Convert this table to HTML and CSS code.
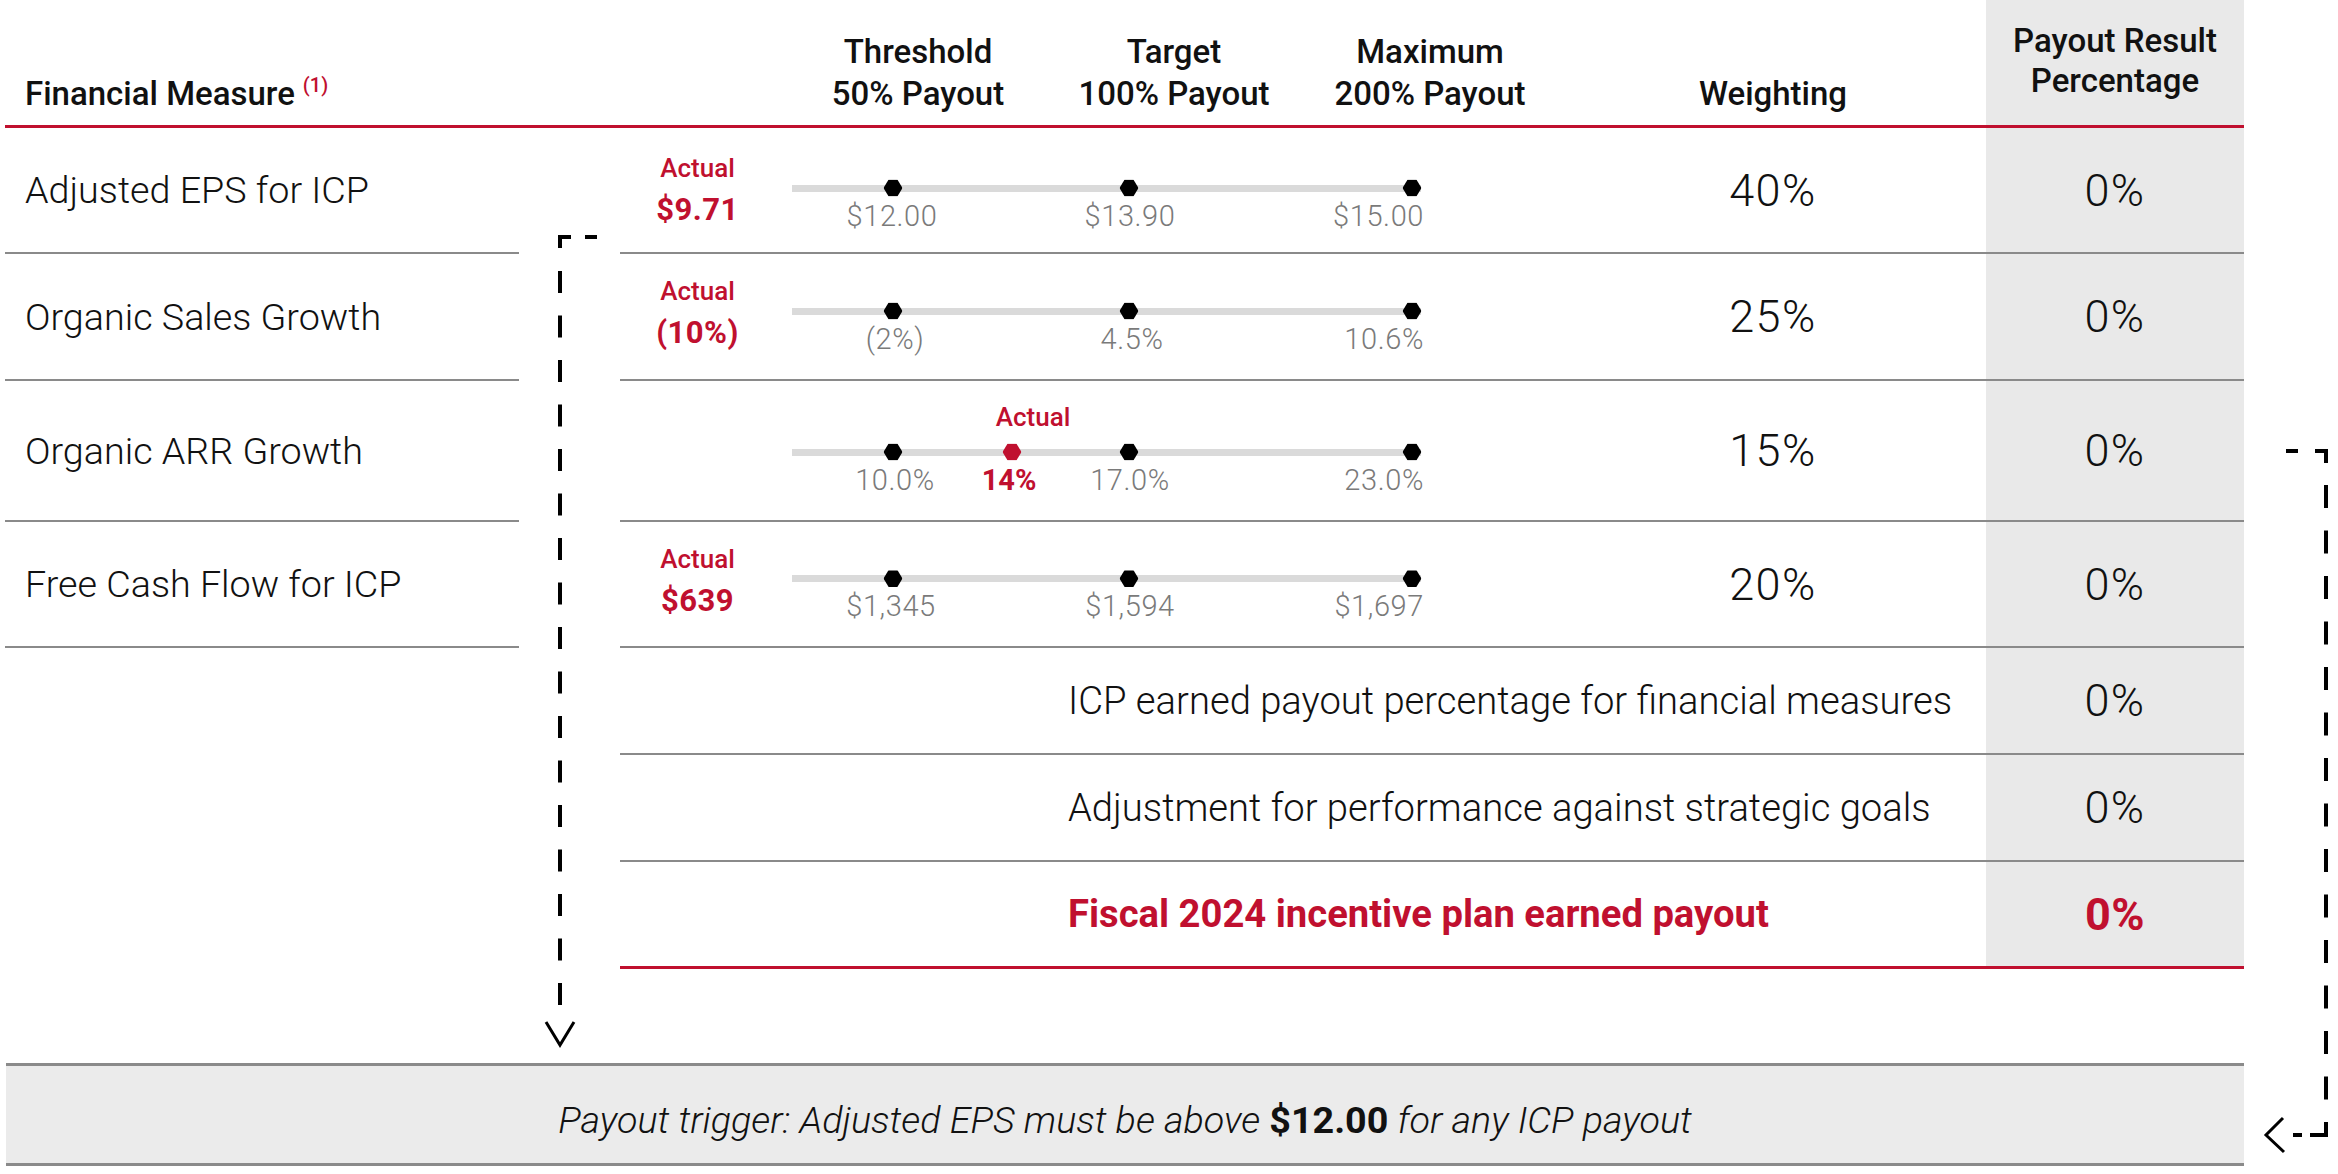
FILE: index.html
```html
<!DOCTYPE html>
<html lang="en">
<head>
<meta charset="utf-8">
<title>Fiscal 2024 ICP Payout</title>
<link rel="stylesheet" href="styles.css">
</head>
<body>
<div class="page">
  <div class="header">
    <div class="c-label h-label"><div class="h-text">Financial Measure<span class="note">(1)</span></div></div>
    <div class="c-gap"></div>
    <div class="c-actual"></div>
    <div class="c-scale h-scale">
      <div class="h-cell">Threshold<br>50% Payout</div>
      <div class="h-cell">Target<br>100% Payout</div>
      <div class="h-cell">Maximum<br>200% Payout</div>
    </div>
    <div class="c-weight h-weight">Weighting</div>
    <div class="c-result h-result">Payout Result<br>Percentage</div>
  </div>

  <div class="row">
    <div class="c-label label">Adjusted EPS for ICP</div>
    <div class="c-gap"></div>
    <div class="c-main">
      <div class="c-actual actual"><span class="a-tag">Actual</span><span class="a-val">$9.71</span></div>
      <div class="c-scale">
        <div class="track">
          <span class="mk" style="left:101px"></span>
          <span class="mk" style="left:337px"></span>
          <span class="mk" style="left:620px"></span>
          <span class="val" style="left:100px">$12.00</span>
          <span class="val" style="left:338px">$13.90</span>
          <span class="val val--end">$15.00</span>
        </div>
      </div>
      <div class="c-weight num">40%</div>
      <div class="c-result num">0%</div>
    </div>
  </div>

  <div class="row row--b">
    <div class="c-label label">Organic Sales Growth</div>
    <div class="c-gap"></div>
    <div class="c-main">
      <div class="c-actual actual up"><span class="a-tag">Actual</span><span class="a-val">(10%)</span></div>
      <div class="c-scale up">
        <div class="track">
          <span class="mk" style="left:101px"></span>
          <span class="mk" style="left:337px"></span>
          <span class="mk" style="left:620px"></span>
          <span class="val" style="left:103px">(2%)</span>
          <span class="val" style="left:340px">4.5%</span>
          <span class="val val--end">10.6%</span>
        </div>
      </div>
      <div class="c-weight num">25%</div>
      <div class="c-result num">0%</div>
    </div>
  </div>

  <div class="row row--c">
    <div class="c-label label">Organic ARR Growth</div>
    <div class="c-gap"></div>
    <div class="c-main">
      <div class="c-actual actual"></div>
      <div class="c-scale">
        <div class="track track--low">
          <span class="mk" style="left:101px"></span>
          <span class="mk mk--red" style="left:220px"></span>
          <span class="mk" style="left:337px"></span>
          <span class="mk" style="left:620px"></span>
          <span class="tag-above" style="left:241px">Actual</span>
          <span class="val" style="left:103px">10.0%</span>
          <span class="val val--red" style="left:217px">14%</span>
          <span class="val" style="left:338px">17.0%</span>
          <span class="val val--end">23.0%</span>
        </div>
      </div>
      <div class="c-weight num">15%</div>
      <div class="c-result num">0%</div>
    </div>
  </div>

  <div class="row">
    <div class="c-label label">Free Cash Flow for ICP</div>
    <div class="c-gap"></div>
    <div class="c-main">
      <div class="c-actual actual up"><span class="a-tag">Actual</span><span class="a-val">$639</span></div>
      <div class="c-scale up">
        <div class="track">
          <span class="mk" style="left:101px"></span>
          <span class="mk" style="left:337px"></span>
          <span class="mk" style="left:620px"></span>
          <span class="val" style="left:99px">$1,345</span>
          <span class="val" style="left:338px">$1,594</span>
          <span class="val val--end">$1,697</span>
        </div>
      </div>
      <div class="c-weight num">20%</div>
      <div class="c-result num">0%</div>
    </div>
  </div>

  <div class="sum">
    <div class="sum-space"></div>
    <div class="sum-main">
      <div class="sum-text">ICP earned payout percentage for financial measures</div>
      <div class="c-result num">0%</div>
    </div>
  </div>
  <div class="sum">
    <div class="sum-space"></div>
    <div class="sum-main">
      <div class="sum-text">Adjustment for performance against strategic goals</div>
      <div class="c-result num">0%</div>
    </div>
  </div>
  <div class="sum sum--total">
    <div class="sum-space"></div>
    <div class="sum-main">
      <div class="sum-text">Fiscal 2024 incentive plan earned payout</div>
      <div class="c-result num">0%</div>
    </div>
  </div>

  <div class="band">Payout trigger: Adjusted EPS must be above <b>$12.00</b> for any ICP payout</div>

  <svg class="arrows" width="2338" height="1174" viewBox="0 0 2338 1174" aria-hidden="true">
    <g fill="none" stroke="#000" stroke-width="4" stroke-linejoin="miter">
      <path d="M585 237 H597"/>
      <path d="M571 237 H560 V248"/>
      <path d="M560 271 V1008" stroke-dasharray="22 22.5"/>
      <path d="M546 1022 L560 1045 L574 1022" stroke-width="3"/>
      <path d="M2286 451 H2298"/>
      <path d="M2315 451 H2326 V463"/>
      <path d="M2326 485 V1100" stroke-dasharray="23 22.5"/>
      <path d="M2326 1122 V1135 H2310"/>
      <path d="M2293 1135 H2302"/>
      <path d="M2283 1118 L2266 1135 L2284 1152" stroke-width="3"/>
    </g>
  </svg>
</div>
</body>
</html>
```

FILE: styles.css
```css
* { box-sizing: border-box; }

html, body {
  margin: 0;
  padding: 0;
  background: #fff;
}

body {
  font-family: "Roboto", "Liberation Sans", sans-serif;
  color: #111;
}

.page {
  position: relative;
  width: 2338px;
  height: 1174px;
  padding-left: 5px;
}

/* column widths */
.c-label { width: 514px; flex: none; }
.c-gap { width: 101px; flex: none; }
.c-actual { width: 155px; flex: none; }
.c-scale { width: 785px; flex: none; }
.c-weight { width: 426px; flex: none; }
.c-result { width: 258px; flex: none; background: #e9e9e9; }

/* header */
.header {
  display: flex;
  width: 2239px;
  height: 128px;
  border-bottom: 3px solid #c0102f;
  font-size: 33px;
  font-weight: 500;
  line-height: 42px;
}
.header > div {
  display: flex;
  align-items: flex-end;
  padding-bottom: 10px;
}
.h-label { padding-left: 20px; }
.h-text { white-space: nowrap; }
.note {
  color: #c0102f;
  font-size: 20px;
  font-weight: 500;
  margin-left: 8px;
  vertical-align: 13px;
  line-height: 1;
}
.h-scale { padding-left: 15px; }
.h-cell { width: 256px; text-align: center; }
.h-weight { justify-content: center; }
.h-result {
  justify-content: center;
  text-align: center;
  line-height: 40px;
  padding-bottom: 24px !important;
}

/* measure rows */
.row {
  display: flex;
  width: 2239px;
  height: 126px;
}
.row--b { height: 127px; }
.row--c { height: 141px; }

.label {
  display: flex;
  align-items: center;
  padding-left: 20px;
  font-size: 37.7px;
  font-weight: 300;
  border-bottom: 2px solid #8a8a8a;
}
.c-main {
  display: flex;
  flex: 1;
  border-bottom: 2px solid #8a8a8a;
}
.actual {
  display: flex;
  flex-direction: column;
  align-items: center;
  justify-content: center;
  color: #c0102f;
}
.a-tag {
  font-size: 26px;
  line-height: 26px;
  font-weight: 500;
}
.a-val {
  margin-top: 13px;
  font-size: 31px;
  line-height: 31px;
  font-weight: 700;
  letter-spacing: 0.5px;
}
.up { padding-bottom: 7px; }

.c-scale {
  display: flex;
  align-items: center;
}
.track {
  position: relative;
  width: 629px;
  height: 7px;
  margin-left: 17px;
  margin-bottom: 4px;
  background: #dadada;
}
.track--low { margin-bottom: 0; margin-top: 3px; }

.mk {
  position: absolute;
  top: 50%;
  width: 19px;
  height: 17px;
  transform: translate(-50%, -50%);
  background: #000;
  clip-path: polygon(27% 0, 73% 0, 100% 50%, 73% 100%, 27% 100%, 0 50%);
}
.mk--red { background: #c0102f; }

.val {
  position: absolute;
  top: 17px;
  transform: translateX(-50%);
  font-size: 29px;
  line-height: 29px;
  font-weight: 300;
  letter-spacing: 0.6px;
  color: #7a7a7a;
  white-space: nowrap;
}
.val--end { left: auto; right: -3px; transform: none; }
.val--red { color: #c0102f; font-weight: 700; letter-spacing: 0; }

.tag-above {
  position: absolute;
  top: -45px;
  transform: translateX(-50%);
  font-size: 26px;
  line-height: 26px;
  font-weight: 500;
  color: #c0102f;
  white-space: nowrap;
}

.num {
  display: flex;
  align-items: center;
  justify-content: center;
  font-size: 45px;
  font-weight: 300;
  letter-spacing: 1.5px;
}

/* summary rows */
.sum {
  display: flex;
  width: 2239px;
  height: 107px;
}
.sum-space { width: 615px; flex: none; }
.sum-main {
  display: flex;
  flex: 1;
  border-bottom: 2px solid #8a8a8a;
}
.sum-text {
  flex: 1;
  display: flex;
  align-items: center;
  padding-left: 448px;
  font-size: 38.2px;
  font-weight: 300;
}
.sum--total .sum-main { border-bottom: 3px solid #c0102f; }
.sum--total .sum-text { color: #c0102f; font-weight: 700; }
.sum--total .num { color: #c0102f; font-weight: 700; letter-spacing: 0.5px; }

/* trigger band */
.band {
  width: 2238px;
  margin-left: 1px;
  margin-top: 94px;
  height: 103px;
  padding-top: 12px;
  line-height: 85px;
  background: #ebebeb;
  border-top: 3px solid #8a8a8a;
  border-bottom: 3px solid #8a8a8a;
  text-align: center;
  font-size: 37.7px;
  font-weight: 300;
  font-style: italic;
}
.band b { font-weight: 700; font-style: normal; }

.arrows {
  position: absolute;
  left: 0;
  top: 0;
  pointer-events: none;
}
```
